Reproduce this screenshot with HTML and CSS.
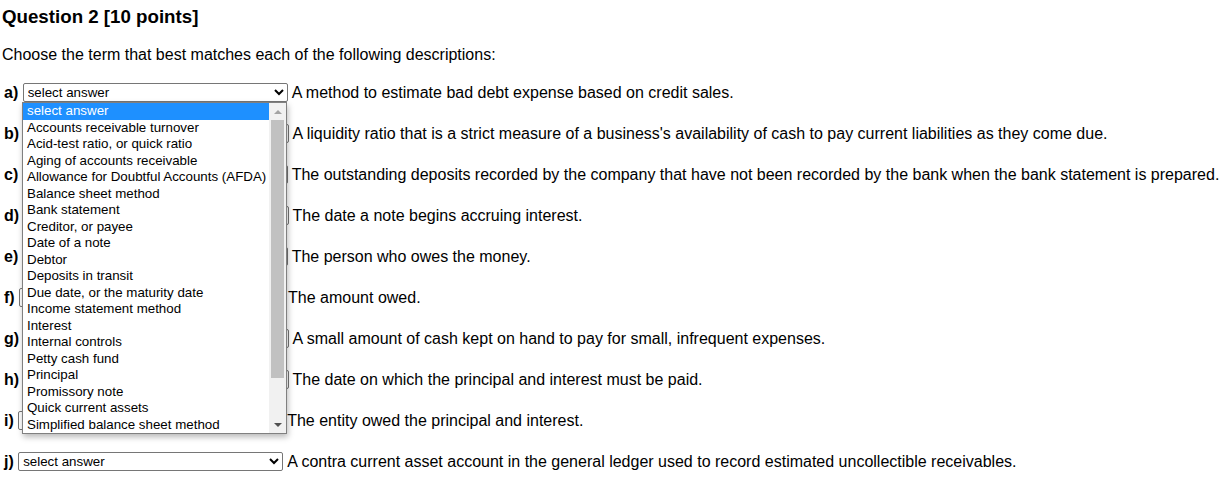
FILE: index.html
```html
<!DOCTYPE html>
<html lang="en">
<head>
<meta charset="utf-8">
<title>Question 2</title>
<link rel="stylesheet" href="styles.css">
</head>
<body>
<div class="page">
  <h3 class="title">Question 2 [10 points]</h3>
  <p class="intro">Choose the term that best matches each of the following descriptions:</p>
  <div class="rows">
    <div class="row"><b class="lbl">a)</b><select class="ans"><option>select answer</option></select><span class="desc">A method to estimate bad debt expense based on credit sales.</span></div>
    <div class="row"><b class="lbl">b)</b><select class="ans"><option>select answer</option></select><span class="desc">A liquidity ratio that is a strict measure of a business's availability of cash to pay current liabilities as they come due.</span></div>
    <div class="row"><b class="lbl">c)</b><select class="ans"><option>select answer</option></select><span class="desc">The outstanding deposits recorded by the company that have not been recorded by the bank when the bank statement is prepared.</span></div>
    <div class="row"><b class="lbl">d)</b><select class="ans"><option>select answer</option></select><span class="desc">The date a note begins accruing interest.</span></div>
    <div class="row"><b class="lbl">e)</b><select class="ans"><option>select answer</option></select><span class="desc">The person who owes the money.</span></div>
    <div class="row"><b class="lbl">f)</b><select class="ans"><option>select answer</option></select><span class="desc">The amount owed.</span></div>
    <div class="row"><b class="lbl">g)</b><select class="ans"><option>select answer</option></select><span class="desc">A small amount of cash kept on hand to pay for small, infrequent expenses.</span></div>
    <div class="row"><b class="lbl">h)</b><select class="ans"><option>select answer</option></select><span class="desc">The date on which the principal and interest must be paid.</span></div>
    <div class="row"><b class="lbl">i)</b><select class="ans"><option>select answer</option></select><span class="desc">The entity owed the principal and interest.</span></div>
    <div class="row"><b class="lbl">j)</b><select class="ans"><option>select answer</option></select><span class="desc">A contra current asset account in the general ledger used to record estimated uncollectible receivables.</span></div>
  </div>

  <div class="popup">
    <ul class="opts">
      <li class="opt sel">select answer</li>
      <li class="opt">Accounts receivable turnover</li>
      <li class="opt">Acid-test ratio, or quick ratio</li>
      <li class="opt">Aging of accounts receivable</li>
      <li class="opt">Allowance for Doubtful Accounts (AFDA)</li>
      <li class="opt">Balance sheet method</li>
      <li class="opt">Bank statement</li>
      <li class="opt">Creditor, or payee</li>
      <li class="opt">Date of a note</li>
      <li class="opt">Debtor</li>
      <li class="opt">Deposits in transit</li>
      <li class="opt">Due date, or the maturity date</li>
      <li class="opt">Income statement method</li>
      <li class="opt">Interest</li>
      <li class="opt">Internal controls</li>
      <li class="opt">Petty cash fund</li>
      <li class="opt">Principal</li>
      <li class="opt">Promissory note</li>
      <li class="opt">Quick current assets</li>
      <li class="opt">Simplified balance sheet method</li>
    </ul>
    <div class="sbar">
      <div class="sbtn"><span class="arr up"></span></div>
      <div class="track"><div class="thumb"></div></div>
      <div class="sbtn"><span class="arr down"></span></div>
    </div>
  </div>
</div>
</body>
</html>
```
FILE: styles.css
```css
html, body {
  margin: 0;
  padding: 0;
  background: #fff;
}
body {
  font-family: "Liberation Sans", Arial, sans-serif;
  color: #000;
  font-size: 16px;
}
.page {
  position: relative;
  padding: 0 2px;
}
.title {
  margin: 0;
  padding-top: 6px;
  font-size: 18.72px;
  font-weight: bold;
  line-height: 22px;
}
.intro {
  margin: 17px 0 0;
  line-height: 19px;
}
.rows {
  margin-top: 8px;
  padding-left: 2px;
  display: flex;
  flex-direction: column;
}
.row {
  height: 41px;
  display: flex;
  align-items: center;
  white-space: nowrap;
}
.lbl {
  font-weight: bold;
}
.ans {
  margin: 0 0 0 4.4px;
  width: 265px;
  height: 19px;
  font-family: "Liberation Sans", Arial, sans-serif;
  font-size: 13.33px;
  color: #000;
  background: #fff;
  border: 1px solid #767676;
  border-radius: 2px;
}
.desc {
  margin-left: 4px;
}
.popup {
  position: absolute;
  left: 22px;
  top: 102px;
  width: 265px;
  height: 332px;
  box-sizing: border-box;
  border: 1px solid #808080;
  background: #fff;
  box-shadow: 1px 3px 6px rgba(0, 0, 0, 0.28);
  display: flex;
}
.opts {
  list-style: none;
  margin: 0;
  padding: 0;
  flex: 1;
  min-width: 0;
}
.opt {
  height: 16.5px;
  line-height: 16.5px;
  font-size: 13.33px;
  padding-left: 4px;
  white-space: nowrap;
  color: #000;
}
.opt.sel {
  background: #1e90ff;
  color: #fff;
}
.sbar {
  width: 17px;
  background: #f1f1f1;
  display: flex;
  flex-direction: column;
}
.sbtn {
  height: 17px;
  display: flex;
  align-items: center;
  justify-content: center;
}
.arr {
  width: 0;
  height: 0;
  border-left: 4px solid transparent;
  border-right: 4px solid transparent;
}
.arr.up {
  border-bottom: 4px solid #a3a3a3;
}
.arr.down {
  border-top: 4px solid #505050;
}
.track {
  flex: 1;
  padding: 0 2px;
}
.thumb {
  height: 258px;
  background: #c1c1c1;
}
```
